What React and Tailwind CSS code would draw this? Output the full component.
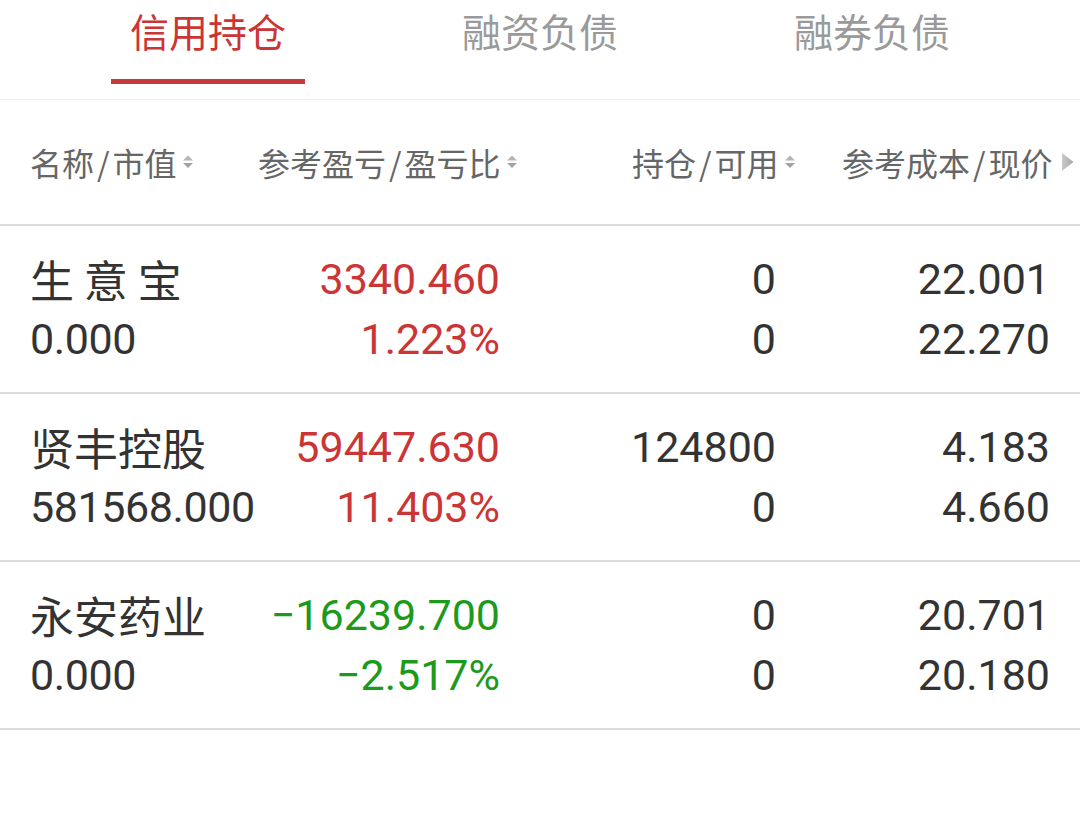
import React from "react";

const SortIcon = () => (
  <svg width="12" height="16" viewBox="0 0 12 16" className="ml-[5px] shrink-0">
    <polygon points="6,1.5 11,6.5 1,6.5" fill="#b5b5b5" />
    <polygon points="1,9 11,9 6,14" fill="#a3a3a3" />
  </svg>
);

const RightIcon = () => (
  <svg width="13" height="20" viewBox="0 0 13 20" className="ml-[8px] shrink-0">
    <defs>
      <linearGradient id="g" x1="0" x2="1" y1="0" y2="0">
        <stop offset="0" stopColor="#cacaca" />
        <stop offset="1" stopColor="#a6a6a6" />
      </linearGradient>
    </defs>
    <polygon points="1,1 12.5,10 1,19" fill="url(#g)" />
  </svg>
);

const H = ({ a, b }) => (
  <span>
    {a}
    <span className="px-[3px]">/</span>
    {b}
  </span>
);

const rows = [
  { name: "生 意 宝", mv: "0.000", pl: "3340.460", plr: "1.223%", up: true, pos: "0", avail: "0", cost: "22.001", price: "22.270" },
  { name: "贤丰控股", mv: "581568.000", pl: "59447.630", plr: "11.403%", up: true, pos: "124800", avail: "0", cost: "4.183", price: "4.660" },
  { name: "永安药业", mv: "0.000", pl: "−16239.700", plr: "−2.517%", up: false, pos: "0", avail: "0", cost: "20.701", price: "20.180" },
];

export default function App() {
  return (
    <div className="w-[1080px] h-[816px] bg-white overflow-hidden font-['Roboto','Noto_Sans_CJK_SC',sans-serif]">
      {/* Tabs */}
      <div className="h-[100px] border-b border-[#eeeeee] flex px-[42px]">
        {["信用持仓", "融资负债", "融券负债"].map((t, i) => (
          <div key={t} className="w-[332px] flex flex-col items-center">
            <div
              className={
                "leading-[60px] text-[39px] font-['Noto_Sans_CJK_SC',sans-serif] " +
                (i === 0 ? "text-[#cc3535]" : "text-[#9a9a9a]")
              }
            >
              {t}
            </div>
            {i === 0 && <div className="mt-[19px] h-[5px] w-[194px] bg-[#c93a3a]" />}
          </div>
        ))}
      </div>

      {/* Header */}
      <div className="h-[126px] border-b-2 border-[#dcdcdc] flex items-center pl-[30px] text-[32px] text-[#666666] font-['Noto_Sans_CJK_SC',sans-serif]">
        <div className="w-[228px] flex items-center">
          <H a="名称" b="市值" />
          <SortIcon />
        </div>
        <div className="w-[374px] flex items-center">
          <H a="参考盈亏" b="盈亏比" />
          <SortIcon />
        </div>
        <div className="w-[210px] flex items-center">
          <H a="持仓" b="可用" />
          <SortIcon />
        </div>
        <div className="flex items-center whitespace-nowrap">
          <H a="参考成本" b="现价" />
          <RightIcon />
        </div>
      </div>

      {/* Rows */}
      {rows.map((r) => {
        const c = r.up ? "text-[#cc3535]" : "text-[#1c9a1c]";
        return (
          <div
            key={r.name}
            className="h-[168px] border-b-2 border-[#dcdcdc] pl-[30px] pt-[23px] grid grid-cols-[228px_242px_276px_274px] text-[43px] leading-[60px] text-[#333333]"
          >
            <div className="flex flex-col whitespace-nowrap">
              <span className="font-['Noto_Sans_CJK_SC',sans-serif] text-[44px]">{r.name}</span>
              <span className="tracking-[-0.4px]">{r.mv}</span>
            </div>
            <div className={"flex flex-col items-end " + c}>
              <span>{r.pl}</span>
              <span>{r.plr}</span>
            </div>
            <div className="flex flex-col items-end">
              <span>{r.pos}</span>
              <span>{r.avail}</span>
            </div>
            <div className="flex flex-col items-end">
              <span>{r.cost}</span>
              <span>{r.price}</span>
            </div>
          </div>
        );
      })}
    </div>
  );
}
